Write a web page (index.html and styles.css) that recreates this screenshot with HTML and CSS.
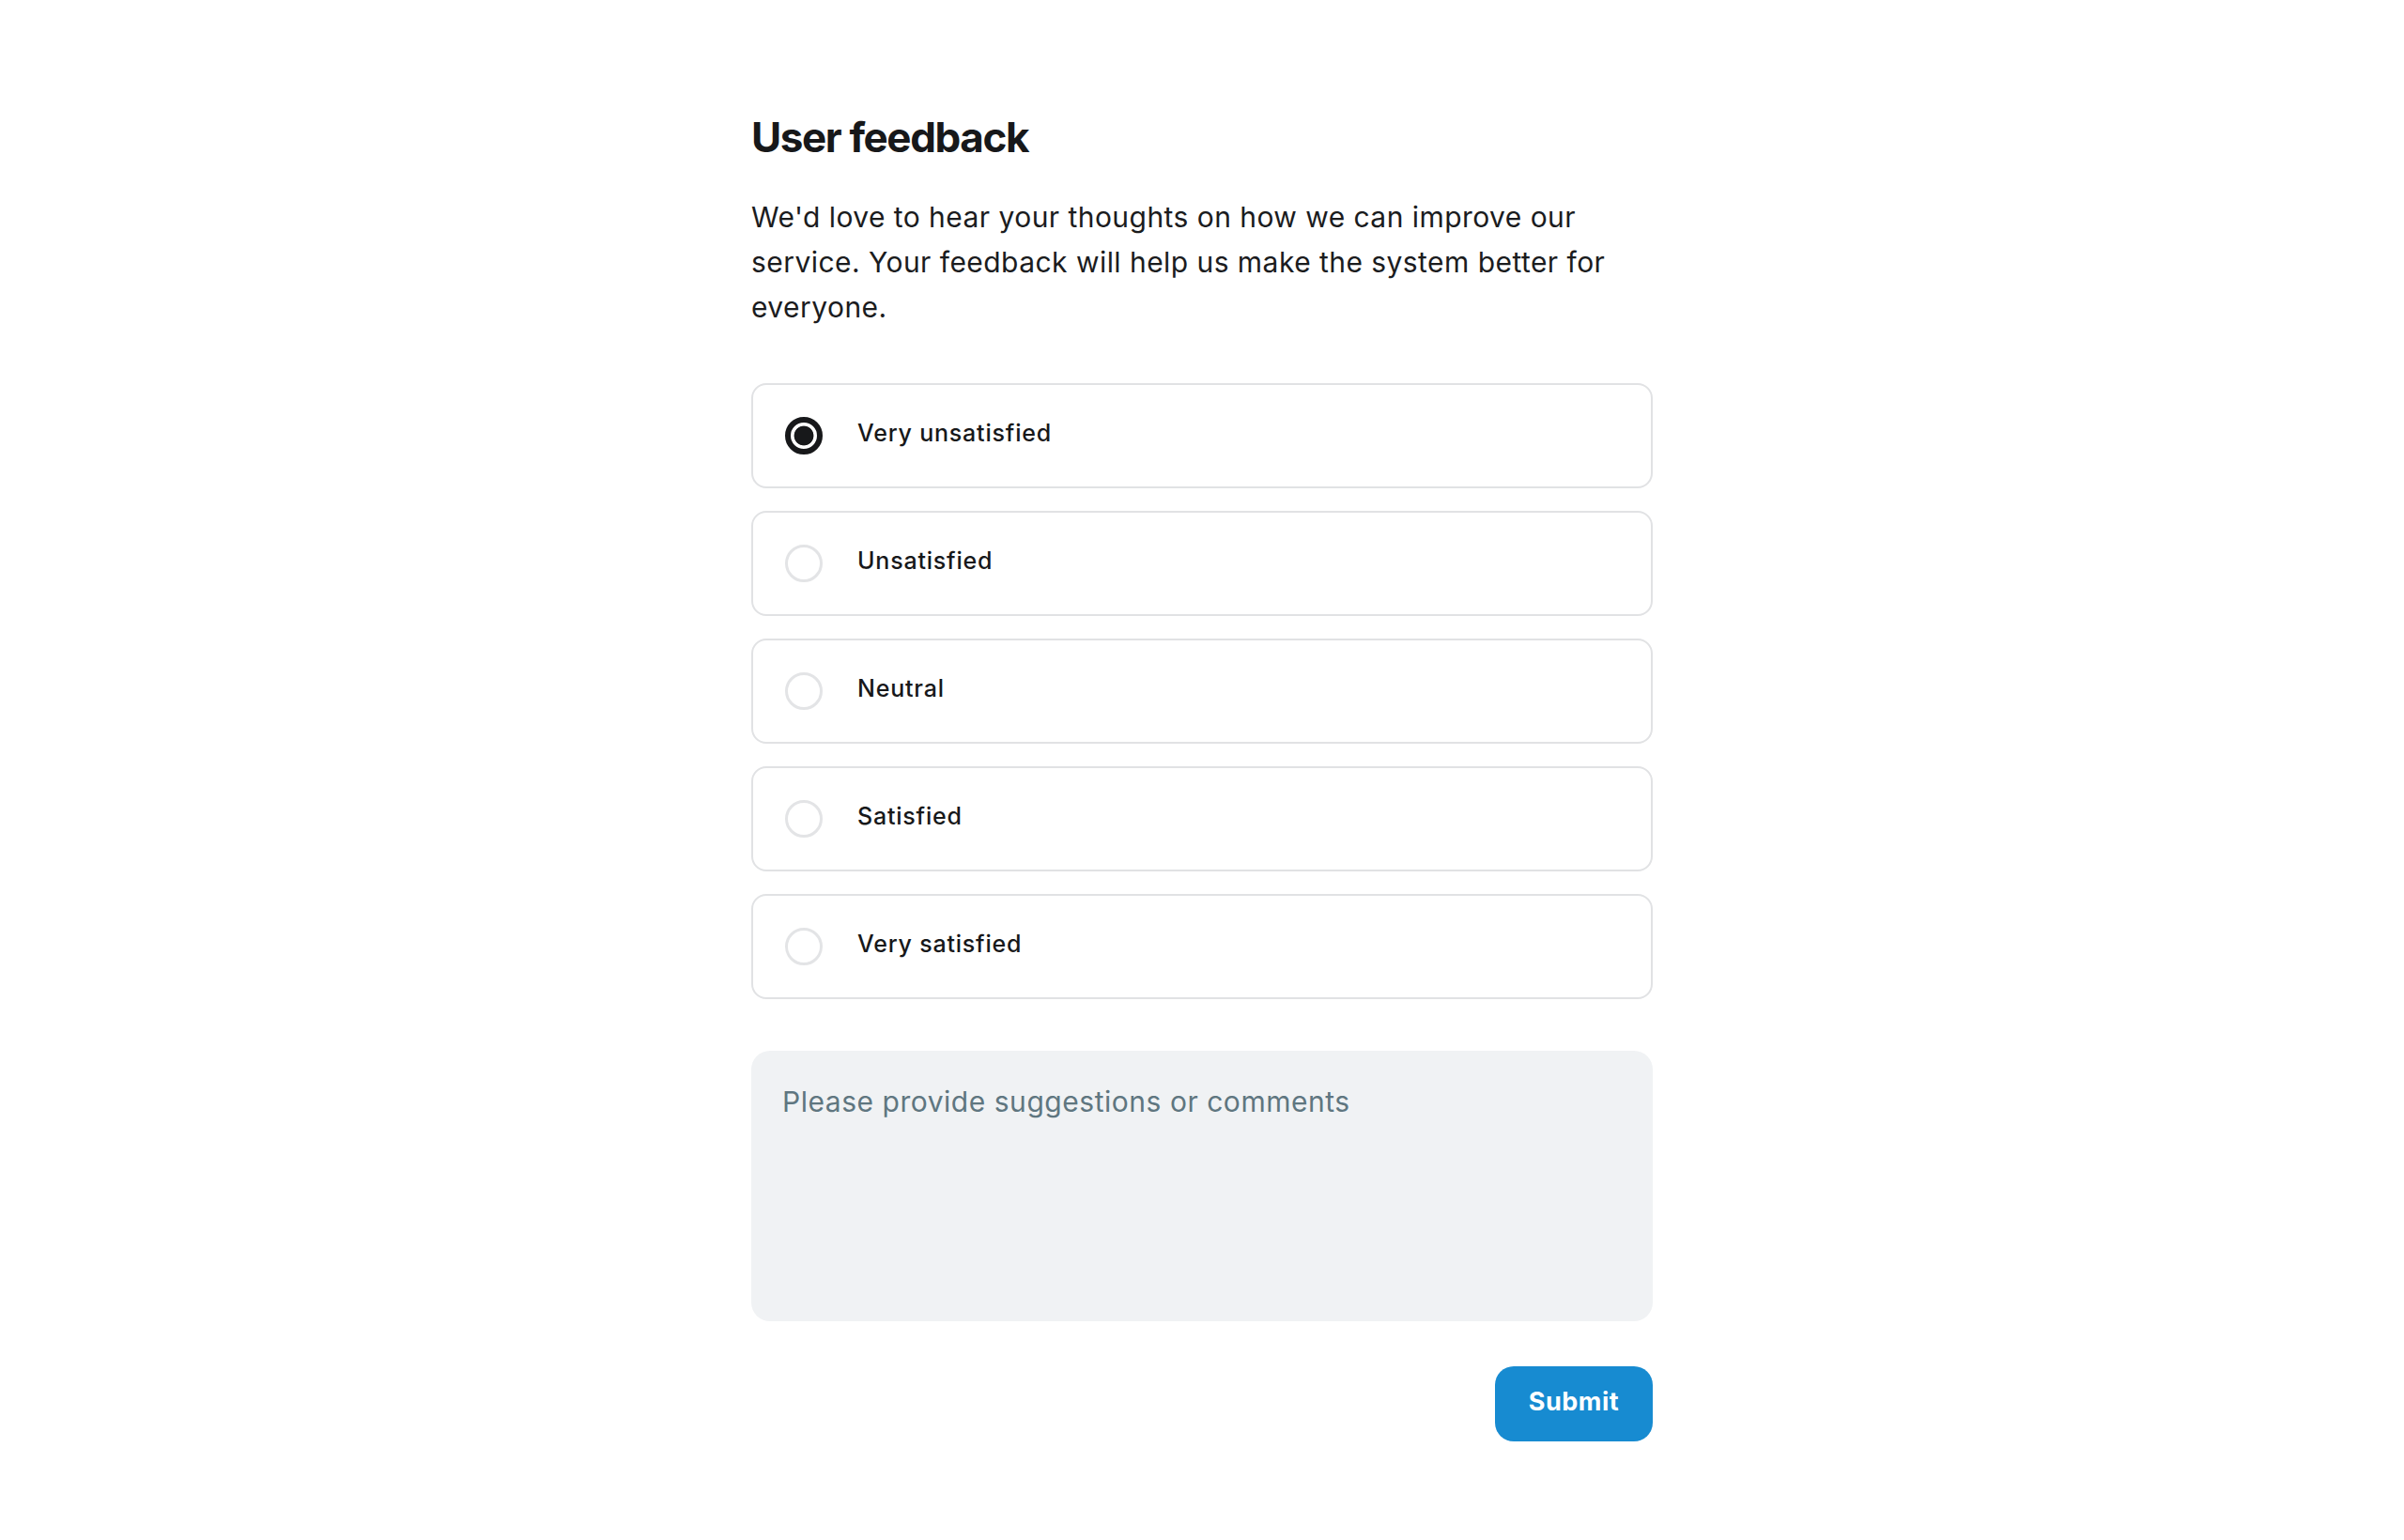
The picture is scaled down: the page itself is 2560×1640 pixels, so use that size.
FILE: index.html
```html
<!DOCTYPE html>
<html lang="en">
<head>
<meta charset="utf-8">
<title>User feedback</title>
<link rel="stylesheet" href="styles.css">
</head>
<body>
<main class="page">
  <h1 class="title">User feedback</h1>
  <p class="intro">We'd love to hear your thoughts on how we can improve our service. Your feedback will help us make the system better for everyone.</p>
  <form class="form">
    <div class="options">
      <label class="option"><input class="radio" type="radio" name="rating" checked><span class="option-text">Very unsatisfied</span></label>
      <label class="option"><input class="radio" type="radio" name="rating"><span class="option-text">Unsatisfied</span></label>
      <label class="option"><input class="radio" type="radio" name="rating"><span class="option-text">Neutral</span></label>
      <label class="option"><input class="radio" type="radio" name="rating"><span class="option-text">Satisfied</span></label>
      <label class="option"><input class="radio" type="radio" name="rating"><span class="option-text">Very satisfied</span></label>
    </div>
    <textarea class="comments" placeholder="Please provide suggestions or comments"></textarea>
    <div class="actions">
      <button class="submit" type="button">Submit</button>
    </div>
  </form>
</main>
</body>
</html>
```

FILE: styles.css
```css
* { box-sizing: border-box; }
html, body { margin: 0; padding: 0; background: #ffffff; }
body {
  font-family: "Inter", "Liberation Sans", sans-serif;
  color: #1b1c1e;
}
.page {
  width: 960px;
  margin: 0 auto;
  padding-top: 120px;
}
.title {
  margin: 0;
  font-size: 44px;
  line-height: 52px;
  font-weight: 700;
  letter-spacing: -1.4px;
  color: #17181a;
}
.intro {
  margin: 35px 0 0;
  font-size: 30px;
  line-height: 48px;
  font-weight: 400;
  letter-spacing: 0.45px;
  color: #1b1c1e;
}
.form { margin-top: 57px; }
.options {
  display: flex;
  flex-direction: column;
  gap: 24px;
}
.option {
  display: flex;
  align-items: center;
  gap: 37px;
  height: 112px;
  padding: 0 34px;
  border: 2px solid #e1e2e4;
  border-radius: 16px;
  background: #fff;
  cursor: pointer;
}
.radio {
  appearance: none;
  -webkit-appearance: none;
  margin: 0;
  width: 40px;
  height: 40px;
  flex: 0 0 40px;
  border-radius: 50%;
  border: 3px solid #e3e4e6;
  background: #fff;
}
.radio:checked {
  border: 6px solid #17181a;
  background: radial-gradient(circle, #17181a 0 10px, #fff 10.8px);
}
.option-text {
  margin-bottom: 6px;
  font-size: 25px;
  line-height: 32px;
  font-weight: 500;
  letter-spacing: 0.8px;
  color: #17181a;
}
.comments {
  display: block;
  width: 100%;
  height: 288px;
  margin-top: 55px;
  padding: 32px 33px;
  border: none;
  border-radius: 20px;
  background: #f0f2f4;
  font-family: "Inter", "Liberation Sans", sans-serif;
  font-size: 30px;
  line-height: 45px;
  letter-spacing: 0.53px;
  color: #1b1c1e;
  resize: none;
  outline: none;
}
.comments::placeholder { color: #5f7680; opacity: 1; }
.actions {
  display: flex;
  justify-content: flex-end;
  margin-top: 48px;
}
.submit {
  width: 168px;
  height: 80px;
  padding: 0 0 5px;
  border: none;
  border-radius: 20px;
  background: #178bd1;
  color: #ffffff;
  font-family: "Inter", "Liberation Sans", sans-serif;
  font-size: 27px;
  font-weight: 700;
  letter-spacing: 0.5px;
  cursor: pointer;
}
```
